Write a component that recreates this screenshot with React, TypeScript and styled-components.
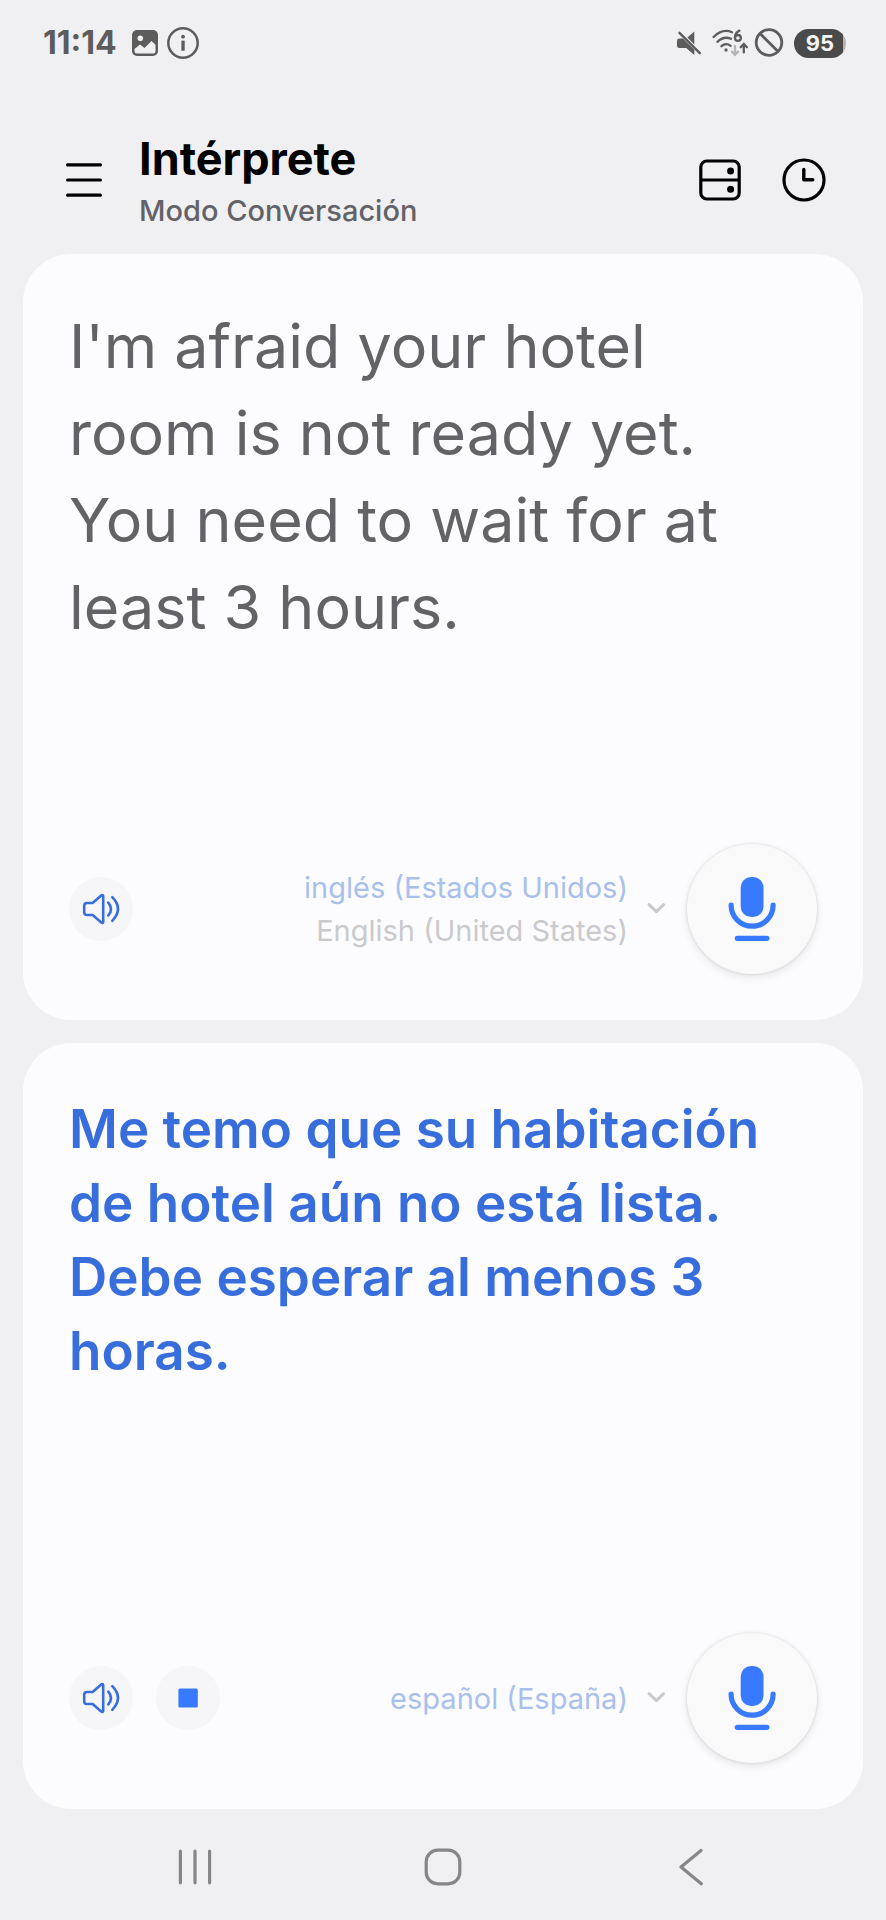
import React from 'react';
import styled, { createGlobalStyle } from 'styled-components';

const color = {
  page: '#f0f0f2',
  card: '#fcfcfe',
  statusInk: '#5c5c5c',
  muted: '#636267',
  accent: '#387aff',
  accentText: '#386edc',
  accentFaded: '#a9c0ec',
  greyFaded: '#cacacc',
  nav: '#868686',
};

const GlobalStyle = createGlobalStyle`
  * { box-sizing: border-box; }
  body {
    margin: 0;
    background: ${color.page};
    font-family: Inter, "Noto Sans", sans-serif;
  }
  button {
    border: 0;
    padding: 0;
    background: none;
    font: inherit;
    color: inherit;
    cursor: pointer;
  }
  svg { display: block; }
`;

const Screen = styled.div`
  display: flex;
  flex-direction: column;
  min-height: 100vh;
`;

const StatusBar = styled.div`
  display: flex;
  align-items: center;
  justify-content: space-between;
  height: 86px;
  padding: 0 40px 0 43px;
  color: ${color.statusInk};
`;

const StatusGroup = styled.div<{ $gap: number }>`
  display: flex;
  align-items: center;
  gap: ${(p) => p.$gap}px;
`;

const Time = styled.time`
  margin-right: 6px;
  font-size: 32px;
  font-weight: 700;
  line-height: 38px;
`;

const Battery = styled.span`
  display: flex;
  align-items: center;
  justify-content: center;
  width: 52px;
  height: 29px;
  border-radius: 15px;
  background: linear-gradient(90deg, #4a4a4a 94%, #b4b4b4 94%);
  color: #f4f4f4;
  font-size: 22px;
  font-weight: 700;
  line-height: 28px;
`;

const Header = styled.header`
  display: flex;
  align-items: center;
  padding: 42px 60px 22px 66px;
`;

const HeaderButton = styled.button`
  flex: none;
  color: #000;
`;

const Titles = styled.div`
  flex: 1;
  margin-left: 37px;
`;

const Title = styled.h1`
  margin: 0;
  color: #000;
  font-size: 45px;
  font-weight: 700;
  line-height: 62px;
`;

const Subtitle = styled.p`
  margin: 0;
  color: ${color.muted};
  font-size: 29px;
  font-weight: 500;
  line-height: 42px;
`;

const HeaderActions = styled.div`
  display: flex;
  gap: 40px;
`;

const Panels = styled.main`
  flex: 1;
  display: flex;
  flex-direction: column;
  gap: 23px;
  padding: 0 23px;
`;

const Panel = styled.section`
  flex: 1 0 0;
  display: flex;
  flex-direction: column;
  justify-content: space-between;
  padding: 49px 46px 46px;
  border-radius: 48px;
  background: ${color.card};
`;

const Phrase = styled.p<{ $translated?: boolean }>`
  margin: 0;
  padding-right: 36px;
  color: ${(p) => (p.$translated ? color.accentText : color.muted)};
  font-size: ${(p) => (p.$translated ? 53 : 61)}px;
  font-weight: ${(p) => (p.$translated ? 600 : 400)};
  line-height: ${(p) => (p.$translated ? 74 : 87)}px;
`;

const Controls = styled.div`
  display: flex;
  align-items: center;
  justify-content: space-between;
`;

const ControlGroup = styled.div<{ $gap: number }>`
  display: flex;
  align-items: center;
  gap: ${(p) => p.$gap}px;
`;

const RoundButton = styled.button`
  width: 64px;
  height: 64px;
  border-radius: 50%;
  background: #f6f6f8;
  color: ${color.accentText};
`;

const MicButton = styled.button`
  width: 130px;
  height: 130px;
  border-radius: 50%;
  background: #f9f9fa;
  box-shadow: 0 0 3px rgba(0, 0, 0, 0.12), 0 3px 9px rgba(0, 0, 0, 0.1);
  color: ${color.accent};
`;

const LanguageButton = styled.button`
  display: flex;
  align-items: center;
  gap: 18px;
  text-align: right;
  font-size: 29px;
  line-height: 43px;
`;

const LanguageName = styled.span<{ $native?: boolean }>`
  display: block;
  color: ${(p) => (p.$native ? color.greyFaded : color.accentFaded)};
`;

const NavBar = styled.nav`
  display: grid;
  grid-template-columns: repeat(3, 1fr);
  align-items: center;
  justify-items: center;
  height: 111px;
  padding: 5px 8% 0;
  color: ${color.nav};
`;

const PictureIcon = () => (
  <svg width="26" height="26" viewBox="0 0 26 26">
    <rect width="26" height="26" rx="5" fill="currentColor" />
    <circle cx="8.3" cy="8.3" r="2.8" fill={color.page} />
    <path d="M2.5 19 L8 14.5 L12.5 18 L19.5 11 L23.5 14.7 V21 Q23.5 23.5 21 23.5 H5 Q2.5 23.5 2.5 21 Z" fill={color.page} />
  </svg>
);

const InfoIcon = () => (
  <svg width="32" height="32" viewBox="0 0 32 32">
    <circle cx="16" cy="16" r="14.7" fill="none" stroke="currentColor" strokeWidth="2.5" />
    <circle cx="16" cy="9.7" r="1.9" fill="currentColor" />
    <rect x="14.4" y="13.6" width="3.3" height="10.2" fill="currentColor" />
  </svg>
);

const MuteIcon = () => (
  <svg width="26" height="26" viewBox="0 0 26 26">
    <path d="M18.3 1.6 V14.6 L11.4 7.6 Z" fill="currentColor" />
    <path d="M3.3 8.4 H7 L18.3 19.7 V25 L10.2 18 H3.3 Q1 18 1 15.7 V10.7 Q1 8.4 3.3 8.4 Z" fill="currentColor" />
    <path d="M3.5 2.8 L23.8 23.2" stroke="currentColor" strokeWidth="2.4" strokeLinecap="round" />
  </svg>
);

const WifiIcon = () => (
  <svg width="38" height="28" viewBox="0 0 38 28" fill="none" stroke="currentColor" strokeWidth="2.3" strokeLinecap="round">
    <path d="M1.6 8 Q10.5 -0.8 20 3.2" />
    <path d="M5.4 12.8 Q12 6.6 19 9.8" />
    <path d="M9.4 17.2 Q14 13.2 18.6 16.8" />
    <circle cx="14" cy="21" r="1.7" fill="currentColor" stroke="none" />
    <path d="M27.4 1.6 Q23 3.8 22.9 8.6" />
    <circle cx="25.9" cy="8.9" r="2.9" />
    <path d="M23 17 V25.5 M19.9 22.6 L23 25.9 L26.1 22.6" stroke="#b4b4b4" />
    <path d="M31.8 23.4 V15.4 M28.7 18.2 L31.8 14.9 L34.9 18.2" />
  </svg>
);

const BlockedIcon = () => (
  <svg width="30" height="30" viewBox="0 0 30 30" fill="none" stroke="currentColor" strokeWidth="2.8">
    <circle cx="15" cy="14.5" r="12.8" />
    <path d="M6 5.5 L24 23.5" />
  </svg>
);

const MenuIcon = () => (
  <svg width="36" height="36" viewBox="0 0 36 36" stroke="currentColor" strokeWidth="3.2" strokeLinecap="round">
    <path d="M1.6 2.9 H34.4 M1.6 18 H34.4 M1.6 33.2 H34.4" />
  </svg>
);

const SplitIcon = () => (
  <svg width="44" height="44" viewBox="0 0 44 44">
    <rect x="2.8" y="3" width="38.4" height="38" rx="6" fill="none" stroke="currentColor" strokeWidth="3.2" />
    <path d="M3 22 H41" stroke="currentColor" strokeWidth="3" />
    <circle cx="32.6" cy="13" r="3.5" fill="currentColor" />
    <circle cx="32.6" cy="31.3" r="3.5" fill="currentColor" />
  </svg>
);

const ClockIcon = () => (
  <svg width="44" height="44" viewBox="0 0 44 44" fill="none" stroke="currentColor" strokeWidth="3.2">
    <circle cx="22" cy="22" r="20" />
    <path d="M21.8 11.4 V21.8 H30.8" strokeWidth="3.4" strokeLinecap="round" strokeLinejoin="round" />
  </svg>
);

const SpeakerIcon = () => (
  <svg width="64" height="64" viewBox="0 0 64 64" fill="none" stroke="currentColor" strokeWidth="2.6" strokeLinecap="round" strokeLinejoin="round">
    <path d="M23.6 26 L32.2 18.6 Q34.2 17.2 34.2 19.6 V44.4 Q34.2 46.8 32.2 45.4 L23.6 38 H18 Q15.2 38 15.2 35.2 V28.8 Q15.2 26 18 26 Z" />
    <path d="M39.3 25.6 Q44.7 32 39.3 38.4" />
    <path d="M43.3 20.2 Q54.7 32 43.3 43.8" />
  </svg>
);

const StopIcon = () => (
  <svg width="64" height="64" viewBox="0 0 64 64">
    <rect x="22.4" y="22.6" width="19.4" height="19" rx="1.5" fill={color.accent} />
  </svg>
);

const MicIcon = () => (
  <svg width="130" height="130" viewBox="0 0 130 130" fill="none" stroke="currentColor" strokeWidth="5.2" strokeLinecap="round">
    <rect x="53.7" y="33" width="22.8" height="40" rx="10.5" fill="currentColor" stroke="none" />
    <path d="M44.1 61.2 A21 21 0 0 0 86.1 61.2" />
    <path d="M50.3 94.3 H79.9" />
  </svg>
);

const ChevronIcon = () => (
  <svg width="20" height="20" viewBox="0 0 20 20" fill="none" stroke={color.greyFaded} strokeWidth="3" strokeLinecap="round" strokeLinejoin="round">
    <path d="M3 5.7 L10.4 12.6 L17.6 5.7" />
  </svg>
);

const RecentsIcon = () => (
  <svg width="38" height="38" viewBox="0 0 38 38" stroke="currentColor" strokeWidth="3.2" strokeLinecap="round">
    <path d="M4.4 3.2 V34.8 M19 3.2 V34.8 M33.6 3.2 V34.8" />
  </svg>
);

const HomeIcon = () => (
  <svg width="38" height="38" viewBox="0 0 38 38" fill="none" stroke="currentColor" strokeWidth="3.2">
    <rect x="2.2" y="2.2" width="33.6" height="33.6" rx="11.5" />
  </svg>
);

const BackIcon = () => (
  <svg width="38" height="38" viewBox="0 0 38 38" fill="none" stroke="currentColor" strokeWidth="3.2" strokeLinecap="round" strokeLinejoin="round">
    <path d="M29 2.4 L9 19 L29.3 35.8" />
  </svg>
);

export default function App() {
  return (
    <Screen>
      <GlobalStyle />
      <StatusBar>
        <StatusGroup $gap={9}>
          <Time>11:14</Time>
          <PictureIcon />
          <InfoIcon />
        </StatusGroup>
        <StatusGroup $gap={10}>
          <MuteIcon />
          <StatusGroup $gap={4}>
            <WifiIcon />
            <BlockedIcon />
          </StatusGroup>
          <Battery>95</Battery>
        </StatusGroup>
      </StatusBar>

      <Header>
        <HeaderButton aria-label="Menú"><MenuIcon /></HeaderButton>
        <Titles>
          <Title>Intérprete</Title>
          <Subtitle>Modo Conversación</Subtitle>
        </Titles>
        <HeaderActions>
          <HeaderButton aria-label="Cambiar vista"><SplitIcon /></HeaderButton>
          <HeaderButton aria-label="Historial"><ClockIcon /></HeaderButton>
        </HeaderActions>
      </Header>

      <Panels>
        <Panel>
          <Phrase lang="en">
            I'm afraid your hotel room is not ready yet. You need to wait for at least 3 hours.
          </Phrase>
          <Controls>
            <RoundButton aria-label="Escuchar"><SpeakerIcon /></RoundButton>
            <ControlGroup $gap={21}>
              <LanguageButton aria-haspopup="listbox">
                <span>
                  <LanguageName>inglés (Estados Unidos)</LanguageName>
                  <LanguageName $native lang="en">English (United States)</LanguageName>
                </span>
                <ChevronIcon />
              </LanguageButton>
              <MicButton aria-label="Hablar en inglés"><MicIcon /></MicButton>
            </ControlGroup>
          </Controls>
        </Panel>

        <Panel>
          <Phrase $translated lang="es">
            Me temo que su habitación de hotel aún no está lista. Debe esperar al menos 3 horas.
          </Phrase>
          <Controls>
            <ControlGroup $gap={23}>
              <RoundButton aria-label="Escuchar"><SpeakerIcon /></RoundButton>
              <RoundButton aria-label="Detener"><StopIcon /></RoundButton>
            </ControlGroup>
            <ControlGroup $gap={21}>
              <LanguageButton aria-haspopup="listbox">
                <LanguageName>español (España)</LanguageName>
                <ChevronIcon />
              </LanguageButton>
              <MicButton aria-label="Hablar en español"><MicIcon /></MicButton>
            </ControlGroup>
          </Controls>
        </Panel>
      </Panels>

      <NavBar>
        <button aria-label="Recientes"><RecentsIcon /></button>
        <button aria-label="Inicio"><HomeIcon /></button>
        <button aria-label="Atrás"><BackIcon /></button>
      </NavBar>
    </Screen>
  );
}
